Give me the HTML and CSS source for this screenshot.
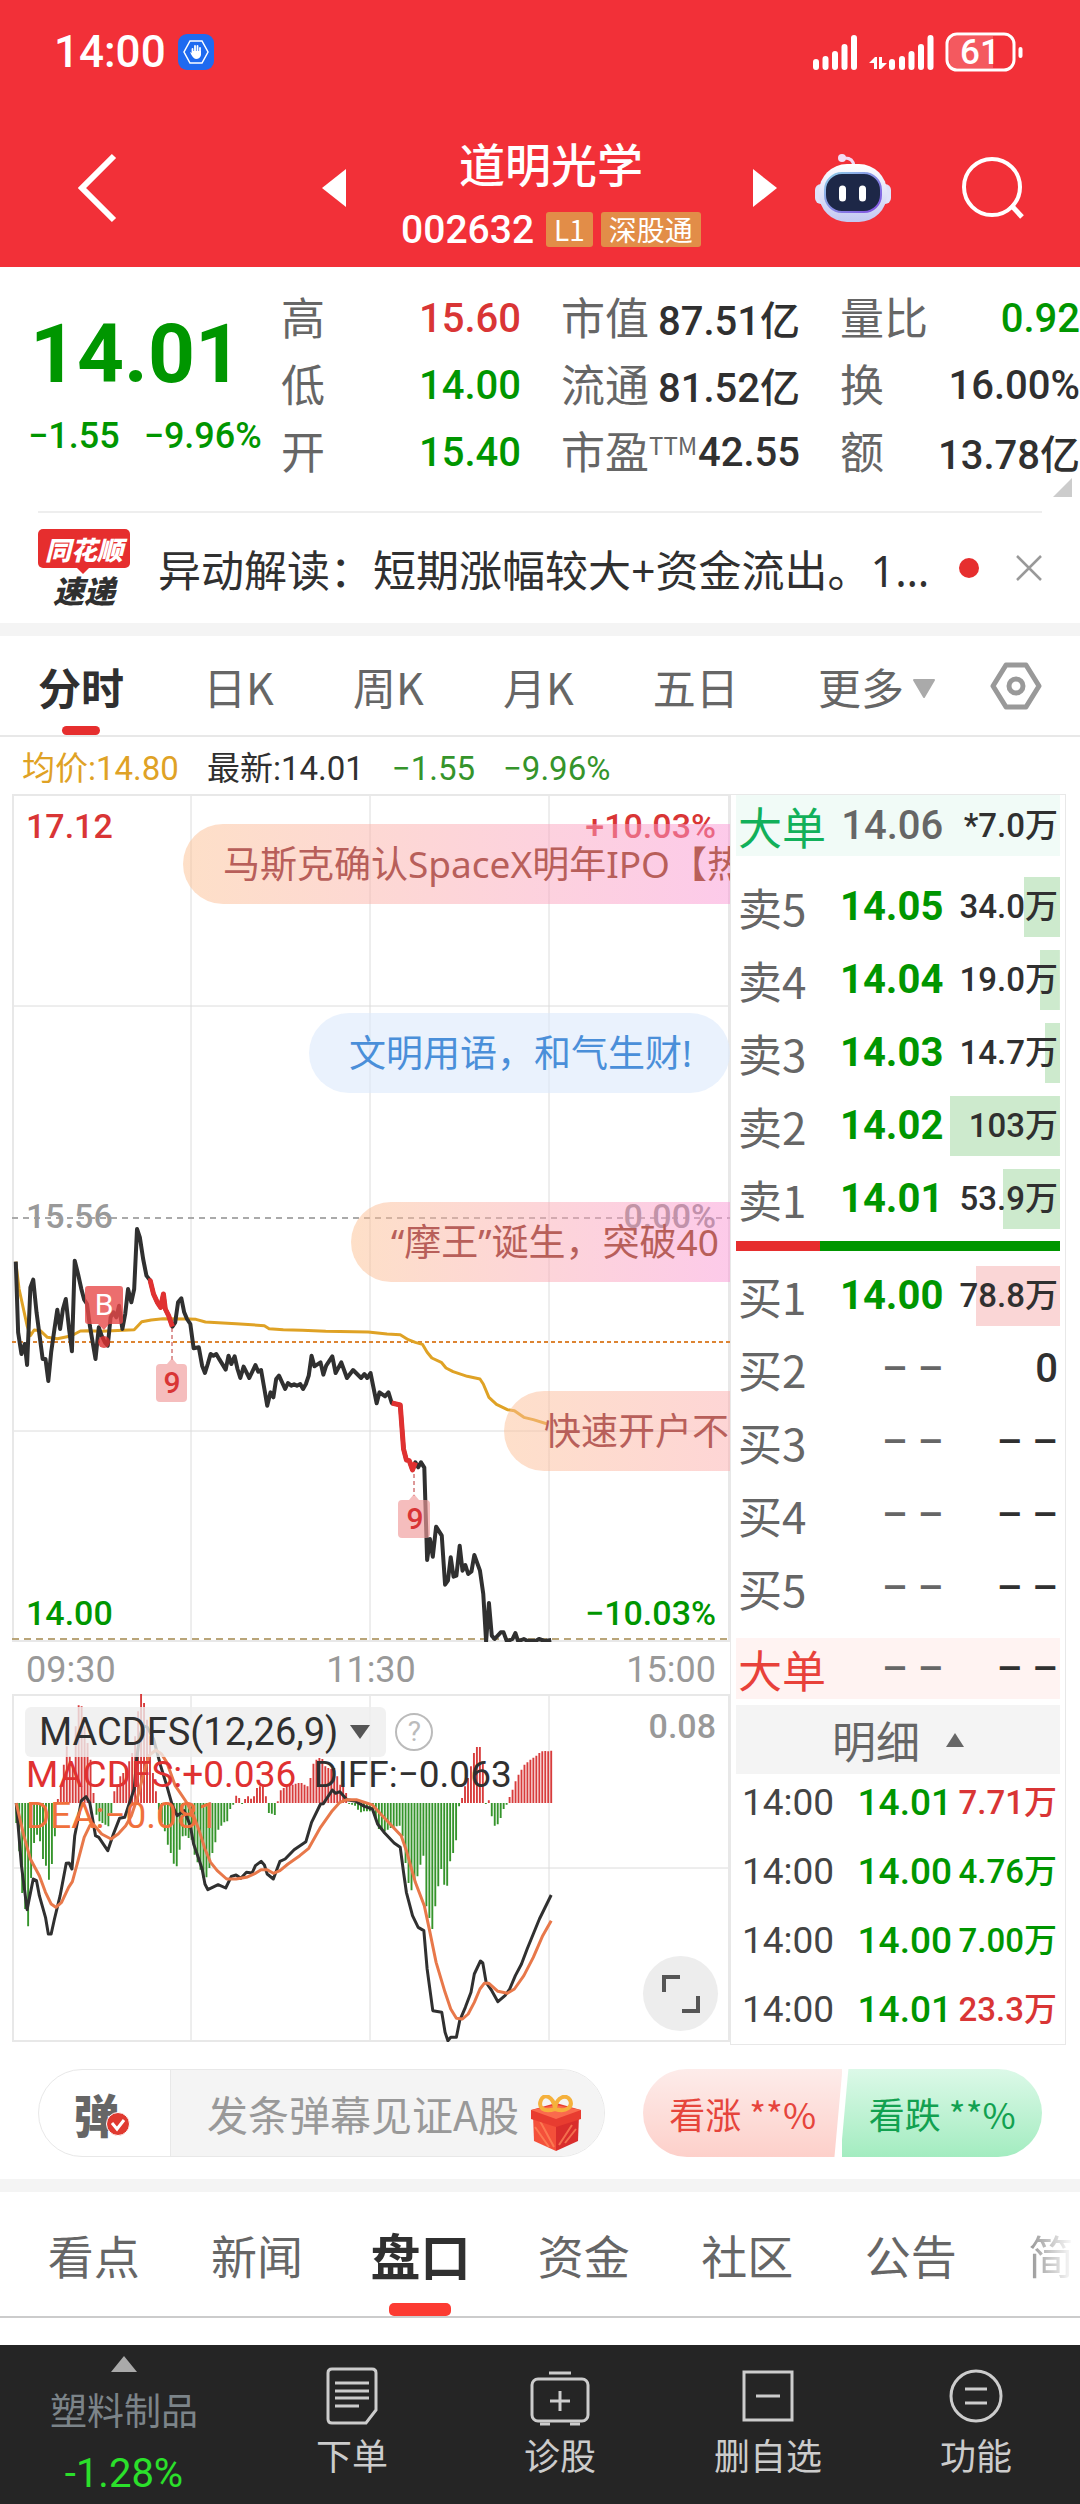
FILE: index.html
```
<!DOCTYPE html>
<html lang="zh-CN">
<head>
    <meta charset="UTF-8">
    <meta name="viewport" content="width=device-width, initial-scale=1.0">
    <title>道明光学 002632</title>
    <link rel="stylesheet" href="styles.css">
</head>
<body>
    <header class="header">
        <div class="status-bar">
            <span class="clock">14:00</span>
            <svg class="app-badge" viewBox="0 0 36 36" aria-hidden="true">
                <rect width="36" height="36" rx="9" fill="#1f6af0"/>
                <path d="M12 7h12l6 11-6 11H12L6 18z" fill="none" stroke="#fff" stroke-width="1.5"/>
                <path d="M14.500 19v-4M17 18v-6M19.500 18v-6M22 19v-5" stroke="#fff" stroke-width="1.8" stroke-linecap="round"/>
                <path d="M12 18l2 1v-2h9v4q-1 4-5 4-3 0-6-7z" fill="#fff"/>
            </svg>
            <svg class="signal" viewBox="0 0 212 40" aria-hidden="true">
                <g stroke="#fff" stroke-width="6" stroke-linecap="round">
                    <path d="M4 30v5M13.500 27v8M23 22v13M32.500 15v20M42 6v29"/>
                    <path d="M80 30v5M90 27v8M99.500 22v13M109 15v20M118.500 6v29"/>
                </g>
                <path d="M57 31l6-6h2v12h-3v-6zM67 25h3v6h5l-6 6h-2z" fill="#fff"/>
                <path d="M138 4h43v32h-43q-2-16 0-32z" fill="#fff" opacity=".2"/>
                <rect x="135" y="2" width="67" height="36" rx="10" fill="none" stroke="#fff" stroke-width="3"/>
                <path d="M208.500 17v7" stroke="#fff" stroke-width="4" stroke-linecap="round"/>
                <text x="168" y="32" class="battery-text">61</text>
            </svg>
        </div>
        <nav class="nav">
            <div class="nav-left">
                <button class="icon-btn" aria-label="返回">
                    <svg width="40" height="70" viewBox="0 0 40 70"><path d="M36 3L4 35l32 32" fill="none" stroke="#fff" stroke-width="6"/></svg>
                </button>
                <button class="icon-btn" aria-label="上一只">
                    <svg width="24" height="38" viewBox="0 0 24 38"><path d="M24 0v38L0 19z" fill="#fff"/></svg>
                </button>
            </div>
            <div class="nav-title">
                <h1>道明光学</h1>
                <div class="code-row">
                    <span class="code num">002632</span>
                    <span class="badge">L1</span>
                    <span class="badge">深股通</span>
                </div>
            </div>
            <div class="nav-right">
                <button class="icon-btn next" aria-label="下一只">
                    <svg width="24" height="38" viewBox="0 0 24 38"><path d="M0 0v38l24-19z" fill="#fff"/></svg>
                </button>
                <button class="icon-btn robot" aria-label="智能助手">
                    <svg width="76" height="70" viewBox="0 0 76 70">
                        <defs>
                            <linearGradient id="shell" x1="0" y1="0" x2="0" y2="1">
                                <stop offset="0" stop-color="#fff"/>
                                <stop offset="1" stop-color="#c3c8f2"/>
                            </linearGradient>
                            <linearGradient id="visor-edge" x1="0" y1="0" x2="1" y2="1">
                                <stop offset="0" stop-color="#8fd0e8"/>
                                <stop offset="1" stop-color="#7f4be0"/>
                            </linearGradient>
                        </defs>
                        <path d="M28 5q10-1 11 8" fill="none" stroke="#f3d8f3" stroke-width="3"/>
                        <circle cx="27" cy="5" r="4" fill="#f3dcf5"/>
                        <rect x="0" y="31" width="14" height="20" rx="6" fill="#dfe2fa"/>
                        <rect x="62" y="31" width="14" height="20" rx="6" fill="#dfe2fa"/>
                        <rect x="4" y="11" width="68" height="58" rx="28" fill="url(#shell)"/>
                        <rect x="10" y="20" width="56" height="39" rx="17" fill="#1d2747" stroke="url(#visor-edge)" stroke-width="2"/>
                        <path d="M27.500 36v9M47.500 36v9" stroke="#fff" stroke-width="7" stroke-linecap="round"/>
                    </svg>
                </button>
                <button class="icon-btn search" aria-label="搜索">
                    <svg width="62" height="62" viewBox="0 0 62 62"><circle cx="30" cy="30" r="28" fill="none" stroke="#fff" stroke-width="4"/><path d="M49 48l11 12" stroke="#fff" stroke-width="5"/></svg>
                </button>
            </div>
        </nav>
    </header>

    <main>
        <!-- Quote summary -->
        <section class="quote num">
            <div class="price-block">
                <div class="price down">14.01</div>
                <div class="change down"><span>−1.55</span><span>−9.96%</span></div>
            </div>
            <dl class="facts">
                <div><dt>高</dt><dd class="up">15.60</dd></div>
                <div><dt>低</dt><dd class="down">14.00</dd></div>
                <div><dt>开</dt><dd class="down">15.40</dd></div>
            </dl>
            <dl class="facts">
                <div><dt>市值</dt><dd>87.51亿</dd></div>
                <div><dt>流通</dt><dd>81.52亿</dd></div>
                <div><dt>市盈<sup>TTM</sup></dt><dd>42.55</dd></div>
            </dl>
            <dl class="facts">
                <div><dt>量比</dt><dd class="down">0.92</dd></div>
                <div><dt>换</dt><dd>16.00%</dd></div>
                <div><dt>额</dt><dd>13.78亿</dd></div>
            </dl>
            <span class="corner"></span>
        </section>

        <!-- News flash -->
        <section class="news">
            <div class="news-logo">
                <span class="logo-top">同花顺</span>
                <span class="logo-bottom">速递</span>
            </div>
            <a href="#" class="news-text">异动解读：短期涨幅较大+资金流出。1…</a>
            <span class="news-dot"></span>
            <button class="icon-btn" aria-label="关闭">
                <svg width="26" height="26" viewBox="0 0 26 26"><path d="M1 1l24 24M25 1L1 25" stroke="#999" stroke-width="2.500"/></svg>
            </button>
        </section>

        <!-- Period tabs -->
        <nav class="period-tabs">
            <button class="active">分时</button>
            <button>日K</button>
            <button>周K</button>
            <button>月K</button>
            <button>五日</button>
            <div class="period-extra">
                <button class="more">更多<svg width="24" height="20" viewBox="0 0 24 20"><path d="M2 1h20L12 18z" fill="#aaa" stroke="#aaa" stroke-linejoin="round" stroke-width="2"/></svg></button>
                <button class="settings" aria-label="图表设置">
                    <svg width="52" height="50" viewBox="0 0 52 50" fill="none" stroke="#999" stroke-width="5">
                        <path d="M16 4h20l13 21-13 21H16L3 25z" stroke-linejoin="round"/>
                        <circle cx="26" cy="25" r="7"/>
                    </svg>
                </button>
            </div>
        </nav>

        <div class="legend num">
            <span class="avg">均价:14.80</span>
            <span>最新:14.01</span>
            <span class="down-soft">−1.55</span>
            <span class="down-soft">−9.96%</span>
        </div>

        <div class="board">
            <div class="charts">
                <div class="price-chart">
                    <svg viewBox="0 0 718 848" class="chart num" role="img" aria-label="分时走势">
                        <g class="grid">
                            <path d="M179 0v848M358 0v848M537 0v848M0 212h718M0 637h718"/>
                            <rect x="1" y="1" width="716" height="846"/>
                        </g>
                        <path d="M0 424h718" stroke="#aaa" stroke-width="2" stroke-dasharray="6 5"/>
                        <path d="M0 548h718" stroke="#dd8432" stroke-width="2" stroke-dasharray="4 3"/>
                        <path d="M0 845h718" stroke="#b9a579" stroke-width="2" stroke-dasharray="7 5"/>
                        <svg width="718" height="848" viewBox="25 -1155 1522 2544" preserveAspectRatio="none" class="series">
                            <polyline class="line-avg" points="33,248 40,330 57,440 64,470 72,453 85,455 100,475 121,479 152,470 158,465 170,456 184,455 215,457 284,452 300,428 320,423 345,419 400,420 415,421 435,429 500,434 560,440 570,449 600,452 640,454 690,457 780,459 820,465 848,467 865,482 880,490 895,496 905,520 915,537 935,550 945,567 960,578 990,592 1017,600 1024,615 1036,655 1052,676 1075,692 1090,695 1110,715 1130,722 1160,735"/>
                            <polyline class="line-price" points="33,248 38,460 45,525 52,495 57,558 64,325 70,302 77,400 90,540 96,540 102,606 108,520 115,450 121,392 127,450 133,390 139,360 146,450 152,517 158,245 165,285 172,330 178,362 184,375 190,440 202,540 209,445 215,470 222,490 228,500 234,415 240,400 246,415 252,380 259,450 265,405 271,330 278,370 284,330 290,150 296,175 303,240 310,290 318,305 325,345 333,370 340,385 346,345 350,390 357,410 365,443 371,430 377,370 384,358 390,400 396,420 403,435 410,508 421,505 428,560 434,582 440,555 446,525 452,530 458,525 465,542 478,572 484,530 490,555 497,532 503,570 509,597 516,563 528,597 541,558 547,578 553,573 560,630 566,680 573,640 579,655 585,600 591,590 604,630 610,612 617,620 623,616 629,620 636,615 642,630 648,615 654,590 660,530 666,562 679,550 685,587 691,560 704,532 711,582 723,550 735,597 748,573 765,597 772,585 778,597 785,582 798,673 804,640 816,652 823,640 830,672 848,678 855,810 861,843 867,845 874,873 880,850 886,865 892,850 899,866 905,1143 911,1080 917,1133 924,1043 936,1070 943,1217 949,1205 955,1135 961,1193 967,1190 974,1100 980,1175 986,1158 992,1185 999,1177 1005,1128 1017,1175 1024,1245 1030,1388 1036,1272 1042,1370 1048,1380 1061,1360 1067,1360 1074,1387 1086,1380 1092,1362 1098,1387 1110,1380 1117,1385 1136,1385 1142,1380 1154,1386 1168,1383"/>
                            <polyline class="line-hot" points="314,306 318,305 325,345 333,370 340,385 346,345 350,390 357,410 365,443"/>
                            <polyline class="line-hot" points="830,672 848,678 855,810 861,843 867,845 874,873 880,850"/>
                        </svg>
                        <!-- Buy and nine-turn markers -->
                        <g opacity=".8">
                            <path d="M76 492h32q3 0 3 3v32q0 3-3 3H97l-5 6-6-6H76q-3 0-3-3v-32q0-3 3-3z" fill="#e84a4a"/>
                            <circle cx="92" cy="548" r="6" fill="#e03131"/>
                        </g>
                        <text x="92" y="521" class="mark-b">B</text>
                        <path d="M160 534v32M402 680v22" stroke="#b33" stroke-width="1" stroke-dasharray="4 3"/>
                        <g fill="#ef9a9a" opacity=".65">
                            <path d="M148 570h7l5-6 5 6h6q4 0 4 4v30q0 4-4 4h-23q-4 0-4-4v-30q0-4 4-4z"/>
                            <path d="M390 706h7l5-6 5 6h7q4 0 4 4v30q0 4-4 4h-24q-4 0-4-4v-30q0-4 4-4z"/>
                        </g>
                        <text x="160" y="599" class="mark-9">9</text>
                        <text x="403" y="735" class="mark-9">9</text>
                        <text x="14" y="44" fill="#d93535">17.12</text>
                        <text x="704" y="44" fill="#d93535" text-anchor="end">+10.03%</text>
                        <text x="14" y="434" fill="#999">15.56</text>
                        <text x="704" y="434" fill="#888" text-anchor="end">0.00%</text>
                        <text x="14" y="831" fill="#009600">14.00</text>
                        <text x="704" y="831" fill="#009600" text-anchor="end">−10.03%</text>
                    </svg>
                    <!-- Bullet comments floating over the chart -->
                    <span class="bullet bullet-1">马斯克确认SpaceX明年IPO【热</span>
                    <span class="bullet bullet-2">文明用语，和气生财!</span>
                    <span class="bullet bullet-3">“摩王”诞生，突破40</span>
                    <span class="bullet bullet-4">快速开户不</span>
                </div>
                <div class="time-axis num"><span>09:30</span><span>11:30</span><span>15:00</span></div>
                <div class="macd">
                    <svg viewBox="0 0 718 348" class="chart num" role="img" aria-label="MACDFS">
                        <g class="grid">
                            <path d="M179 0v348M358 0v348M537 0v348M0 174h718"/>
                            <rect x="1" y="1" width="716" height="346"/>
                        </g>
                        <svg width="718" height="348" viewBox="25 45 1522 1044" preserveAspectRatio="none" class="series">
                            <path id="bars-up" class="bars-up"/>
                            <path id="bars-down" class="bars-down"/>
                            <polyline class="line-diff" points="34,372 45,560 57,692 70,600 77,605 83,650 96,715 102,765 108,765 115,720 127,650 140,553 146,552 152,570 158,470 165,420 172,365 182,353 190,372 202,470 209,475 228,515 240,465 253,418 264,415 272,380 284,330 290,230 296,170 303,140 312,145 325,180 340,260 353,320 365,380 375,410 390,395 403,440 410,495 421,540 428,570 434,615 440,632 450,625 462,617 478,627 490,592 500,588 510,598 522,580 534,582 541,560 553,547 560,558 566,585 579,600 593,547 604,540 623,512 648,488 660,430 679,375 685,374 704,333 711,343 720,338 735,362 754,367 772,382 789,390 800,435 815,462 835,492 848,505 855,580 861,640 874,710 886,745 898,755 905,870 917,995 936,1000 943,1060 949,1085 955,1075 967,1075 974,1025 986,985 998,940 1005,885 1018,846 1023,852 1030,910 1042,935 1055,968 1070,950 1080,930 1092,890 1105,855 1117,810 1130,765 1143,720 1168,648"/>
                            <polyline class="line-dea" points="34,372 50,470 64,540 83,590 96,640 108,675 118,685 130,670 145,625 153,608 165,545 178,475 190,440 197,435 215,465 235,480 250,465 266,440 278,410 290,360 303,290 315,230 330,213 342,225 353,250 371,320 396,372 410,410 423,460 434,510 446,550 460,575 480,600 500,600 522,595 541,583 553,572 566,572 579,583 593,575 610,555 635,530 654,508 679,445 704,395 720,370 735,362 755,362 789,378 810,410 830,440 850,470 861,515 880,610 899,680 911,760 924,850 943,940 955,990 967,1018 980,1020 992,1005 1005,970 1017,930 1026,913 1036,913 1055,937 1075,943 1090,930 1110,890 1130,835 1150,770 1168,725"/>
                        </svg>
                        <text x="704" y="44" fill="#999" text-anchor="end">0.08</text>
                    </svg>
                    <div class="macd-head">
                        <button class="indicator">MACDFS(12,26,9)<svg width="20" height="14" viewBox="0 0 20 14"><path d="M0 0h20L10 14z" fill="#555"/></svg></button>
                        <button class="help" aria-label="指标说明">?</button>
                    </div>
                    <p class="macd-values"><span class="red">MACDFS:+0.036</span> <span>DIFF:−0.063</span><br><span class="orange">DEA:−0.081</span></p>
                    <button class="expand" aria-label="横屏">
                        <svg width="40" height="40" viewBox="0 0 40 40"><path d="M3 18V3h16M37 22v15H21" fill="none" stroke="#555" stroke-width="4"/></svg>
                    </button>
                </div>
            </div>

            <!-- Order book -->
            <aside class="book num">
                <table class="orders">
                    <colgroup><col class="c-side"><col class="c-price"><col class="c-qty"></colgroup>
                    <tbody class="big big-sell">
                        <tr><th scope="row">大单</th><td>14.06</td><td>*7.0万</td></tr>
                    </tbody>
                    <tbody class="sell">
                        <tr><th scope="row">卖5</th><td>14.05</td><td style="--bar: 31%">34.0万</td></tr>
                        <tr><th scope="row">卖4</th><td>14.04</td><td style="--bar: 17%">19.0万</td></tr>
                        <tr><th scope="row">卖3</th><td>14.03</td><td style="--bar: 13%">14.7万</td></tr>
                        <tr><th scope="row">卖2</th><td>14.02</td><td style="--bar: 94%">103万</td></tr>
                        <tr><th scope="row">卖1</th><td>14.01</td><td style="--bar: 49%">53.9万</td></tr>
                    </tbody>
                </table>
                <div class="ratio"><span style="width: 26%"></span></div>
                <table class="orders">
                    <colgroup><col class="c-side"><col class="c-price"><col class="c-qty"></colgroup>
                    <tbody class="buy">
                        <tr><th scope="row">买1</th><td>14.00</td><td style="--bar: 72%">78.8万</td></tr>
                        <tr><th scope="row">买2</th><td class="none">– –</td><td class="whole">0</td></tr>
                        <tr><th scope="row">买3</th><td class="none">– –</td><td class="whole">– –</td></tr>
                        <tr><th scope="row">买4</th><td class="none">– –</td><td class="whole">– –</td></tr>
                        <tr><th scope="row">买5</th><td class="none">– –</td><td class="whole">– –</td></tr>
                    </tbody>
                    <tbody class="big big-buy">
                        <tr><th scope="row">大单</th><td class="none">– –</td><td class="whole">– –</td></tr>
                    </tbody>
                </table>
                <button class="detail-toggle">明细<svg width="18" height="14" viewBox="0 0 18 14"><path d="M9 0l9 14H0z" fill="#666"/></svg></button>
                <table class="trades">
                    <tr><td>14:00</td><td>14.01</td><td class="up">7.71万</td></tr>
                    <tr><td>14:00</td><td>14.00</td><td class="down">4.76万</td></tr>
                    <tr><td>14:00</td><td>14.00</td><td class="down">7.00万</td></tr>
                    <tr><td>14:00</td><td>14.01</td><td class="up">23.3万</td></tr>
                </table>
            </aside>
        </div>

        <section class="interact">
            <div class="comment-box">
                <button class="bullet-switch" aria-label="弹幕开关">弹<svg width="24" height="24" viewBox="0 0 24 24"><circle cx="12" cy="12" r="11.500" fill="#e03a30" stroke="#fff"/><path d="M6 11l5 6 7-9" fill="none" stroke="#fff" stroke-width="3"/></svg></button>
                <input type="text" placeholder="发条弹幕见证A股" aria-label="发条弹幕">
                <svg class="gift" viewBox="0 0 52 56" aria-hidden="true">
                    <path d="M3 20l23 8v28L4 46z" fill="#f4503a"/>
                    <path d="M49 20l-23 8v28l22-10z" fill="#d92d2c"/>
                    <path d="M10 26l14 26M5 32l14 20M42 30L29 50M46 34L35 48" stroke="#ff8a5c" stroke-width="2" opacity=".7"/>
                    <path d="M1 15l25-7 25 7v9l-25 8-25-8z" fill="#e83c30"/>
                    <path d="M1 15l25-5 25 5-25 9z" fill="#fa6a4d"/>
                    <path d="M25 14C13 18 8 12 11 5s12-4 14 8c2-12 12-14 15-8s-3 13-15 9z" fill="none" stroke="#f5b13c" stroke-width="4"/>
                </svg>
            </div>
            <div class="vote">
                <button class="vote-up">看涨 **%</button>
                <button class="vote-down">看跌 **%</button>
            </div>
        </section>

        <nav class="info-tabs">
            <button>看点</button>
            <button>新闻</button>
            <button class="active">盘口</button>
            <button>资金</button>
            <button>社区</button>
            <button>公告</button>
            <button class="faded">简况</button>
        </nav>
    </main>

    <footer class="toolbar">
        <a href="#" class="sector">
            <svg width="26" height="16" viewBox="0 0 26 16"><path d="M13 0l13 16H0z" fill="#aaa"/></svg>
            <span>塑料制品</span>
            <strong>-1.28%</strong>
        </a>
        <a href="#" class="tool">
            <svg width="60" height="60" viewBox="0 0 60 60"><path d="M10 3h40q4 0 4 4v37L44 57H10q-4 0-4-4V7q0-4 4-4z"/><path d="M13 17h34M13 25h34M13 32h34M13 40h24"/></svg>
            <span>下单</span>
        </a>
        <a href="#" class="tool">
            <svg width="60" height="60" viewBox="0 0 60 60"><rect x="2" y="13" width="56" height="42" rx="6"/><path d="M19 7h22M30 25v20M20 35h20M10 58h10M40 58h10"/></svg>
            <span>诊股</span>
        </a>
        <a href="#" class="tool">
            <svg width="60" height="60" viewBox="0 0 60 60"><rect x="6" y="6" width="48" height="48"/><path d="M18 30h24"/></svg>
            <span>删自选</span>
        </a>
        <a href="#" class="tool">
            <svg width="60" height="60" viewBox="0 0 60 60"><circle cx="30" cy="30" r="25"/><path d="M19 23h22M19 37h22"/></svg>
            <span>功能</span>
        </a>
    </footer>
    <script src="chart.js"></script>
</body>
</html>
```
FILE: styles.css
```
* {
    box-sizing: border-box;
}
body {
    margin: 0;
    font-family: 'Noto Sans CJK SC', sans-serif;
    color: #303030;
    background: #fff;
    font-size: 44px;
}
.num {
    font-family: Roboto, 'Noto Sans CJK SC', sans-serif;
}
button {
    border: none;
    background: none;
    padding: 0;
    margin: 0;
    font: inherit;
    color: inherit;
    cursor: pointer;
}
a {
    color: inherit;
    text-decoration: none;
}
h1, dl, dd, p {
    margin: 0;
}
.up {
    color: #d93535;
}
.down {
    color: #009600;
}
.down-soft {
    color: #35942b;
}
.icon-btn {
    display: flex;
}

/* Header */
.header {
    background: #f23038;
    color: #fff;
}
.status-bar {
    display: flex;
    align-items: center;
    height: 104px;
    padding: 0 56px 0 54px;
}
.clock {
    font: 500 44px/50px Roboto, sans-serif;
}
.app-badge {
    width: 36px;
    margin-left: 12px;
}
.signal {
    width: 212px;
    margin-left: auto;
}
.battery-text {
    font: 500 35px Roboto, sans-serif;
    fill: #fff;
    text-anchor: middle;
}
.nav {
    display: grid;
    grid-template-columns: 1fr auto 1fr;
    align-items: center;
    height: 163px;
    padding: 5px 56px 0 78px;
}
.nav-left {
    display: flex;
    align-items: center;
    justify-content: space-between;
    padding-right: 55px;
}
.nav-right {
    display: flex;
    align-items: center;
    padding-left: 52px;
}
.nav-right .next {
    margin-right: auto;
}
.nav-right .robot {
    margin-right: 71px;
}
.nav-title {
    padding-top: 16px;
    text-align: center;
}
.nav-title h1 {
    margin-bottom: 5px;
    font-size: 46px;
    font-weight: 500;
    line-height: 62px;
}
.code-row {
    display: flex;
    align-items: center;
    gap: 8px;
    line-height: 64px;
}
.code {
    font-size: 39px;
    font-weight: 500;
    margin-right: 4px;
}
.badge {
    padding: 0 8px;
    border-radius: 3px;
    background: #e28d48;
    font-size: 28px;
    line-height: 35px;
}

/* Quote */
.quote {
    position: relative;
    display: grid;
    grid-template-columns: minmax(0, 213fr) minmax(0, 240fr) minmax(0, 239fr) minmax(0, 240fr);
    gap: 40px;
    padding: 16px 0 27px 28px;
}
.price-block {
    white-space: nowrap;
}
.price {
    font-size: 82px;
    font-weight: bold;
    line-height: 110px;
    padding: 16px 0 0 2px;
}
.change {
    display: flex;
    gap: 24px;
    font-size: 36px;
    font-weight: 500;
    line-height: 54px;
}
.facts div {
    display: flex;
    justify-content: space-between;
    align-items: center;
    height: 67px;
    white-space: nowrap;
}
.facts dt {
    font-family: 'Noto Sans CJK SC', sans-serif;
    color: #666;
    line-height: 67px;
}
.facts dd {
    font-size: 40px;
    font-weight: 500;
    padding-top: 3px;
}
.facts sup {
    font-size: 24px;
    line-height: 24px;
    vertical-align: 14px;
}
.corner {
    position: absolute;
    right: 8px;
    bottom: 14px;
    border-left: 19px solid transparent;
    border-bottom: 19px solid #ccc;
}

/* News */
.news {
    display: flex;
    align-items: center;
    height: 112px;
    margin: 0 38px;
    border-top: 2px solid #eee;
}
.news-logo {
    flex: none;
    width: 92px;
    margin-right: 28px;
    text-align: center;
    font-style: italic;
    font-weight: 900;
}
.logo-top {
    position: relative;
    display: block;
    background: #e62e2e;
    color: #fff;
    border-radius: 5px;
    font-size: 26px;
    line-height: 39px;
}
.logo-top::after {
    content: '';
    position: absolute;
    left: 38px;
    top: 38px;
    border: 7px solid transparent;
    border-top-color: #e62e2e;
}
.logo-bottom {
    display: block;
    padding-top: 4px;
    font-size: 31px;
    line-height: 36px;
}
.news-text {
    flex: 1;
    font-family: 'Noto Sans', 'Noto Sans CJK SC', sans-serif;
    font-size: 43px;
    white-space: nowrap;
}
.news-dot {
    width: 20px;
    height: 20px;
    margin-right: 37px;
    border-radius: 50%;
    background: #e62e2e;
}

/* Period tabs */
.period-tabs {
    display: flex;
    justify-content: space-between;
    align-items: center;
    height: 114px;
    padding: 0 38px;
    border-top: 13px solid #f4f4f4;
    border-bottom: 2px solid #e8e8e8;
    font-size: 43px;
    color: #666;
}
.period-tabs button {
    position: relative;
    line-height: 98px;
    white-space: nowrap;
}
.period-tabs .active {
    color: #303030;
    font-weight: bold;
}
.period-tabs .active::after,
.info-tabs .active::after {
    content: '';
    position: absolute;
    left: 50%;
    bottom: 0;
    width: 38px;
    height: 9px;
    margin-left: -19px;
    border-radius: 5px;
    background: #e62e2e;
}
.period-extra {
    display: flex;
    align-items: center;
    gap: 54px;
}
.more svg {
    margin-left: 8px;
    vertical-align: 6px;
}
.settings {
    display: flex;
}
.legend {
    display: flex;
    gap: 28px;
    padding: 6px 22px 0;
    font-size: 33px;
    line-height: 51px;
}
.avg {
    color: #dfa225;
}

/* Charts */
.board {
    display: grid;
    grid-template-columns: 718fr 336fr;
    padding: 0 14px 0 12px;
}
.chart {
    display: block;
    width: 100%;
    font-size: 34px;
    font-weight: 500;
}
.price-chart,
.macd {
    position: relative;
    overflow: hidden;
}
.grid {
    fill: none;
    stroke: #dcdcdc;
    stroke-width: 1;
}
.grid rect {
    stroke: #e8e8e8;
    stroke-width: 2;
}
.series {
    fill: none;
    stroke-linejoin: round;
}
.series polyline {
    vector-effect: non-scaling-stroke;
}
.line-avg {
    stroke: #dfa225;
    stroke-width: 3;
}
.line-price {
    stroke: #303030;
    stroke-width: 4;
}
.line-hot {
    stroke: #e03131;
    stroke-width: 5;
}
.line-diff {
    stroke: #303030;
    stroke-width: 3;
}
.line-dea {
    stroke: #e8784a;
    stroke-width: 3;
}
.bars-up {
    stroke: #d83c3c;
    stroke-width: 4;
}
.bars-down {
    stroke: #35942b;
    stroke-width: 4;
}
.mark-b {
    font: 30px Roboto, sans-serif;
    fill: #fff;
    text-anchor: middle;
}
.mark-9 {
    font-size: 30px;
    fill: #d93535;
    text-anchor: middle;
}
.bullet {
    position: absolute;
    right: 0;
    height: 80px;
    padding-left: 40px;
    border-radius: 40px 0 0 40px;
    background: linear-gradient(90deg, rgba(252, 192, 145, .5), rgba(250, 150, 212, .5));
    color: #b85f5a;
    font-family: 'Noto Sans', 'Noto Sans CJK SC', sans-serif;
    font-size: 37px;
    line-height: 80px;
    white-space: nowrap;
    overflow: hidden;
}
.bullet-1 {
    left: 171px;
    top: 30px;
}
.bullet-2 {
    left: 297px;
    top: 219px;
    border-radius: 40px;
    background: rgba(220, 233, 252, .6);
    color: #4a8fd9;
}
.bullet-3 {
    left: 339px;
    top: 408px;
}
.bullet-4 {
    left: 492px;
    top: 597px;
    background: linear-gradient(90deg, rgba(252, 192, 150, .5), rgba(252, 172, 172, .5));
}
.time-axis {
    display: flex;
    justify-content: space-between;
    padding: 4px 14px 0;
    color: #999;
    font-size: 36px;
    line-height: 48px;
}
.macd-head {
    position: absolute;
    left: 13px;
    top: 13px;
    display: flex;
    align-items: center;
    gap: 9px;
}
.indicator {
    display: flex;
    align-items: center;
    gap: 12px;
    padding: 0 16px 0 14px;
    border-radius: 6px;
    background: rgba(238, 238, 238, .8);
    font: 38px/50px Roboto, sans-serif;
}
.help {
    width: 38px;
    height: 38px;
    border: 2px solid #bbb;
    border-radius: 50%;
    color: #bbb;
    font: 28px/32px Roboto, sans-serif;
}
.macd-values {
    position: absolute;
    left: 14px;
    top: 60px;
    font: 37px/41px Roboto, sans-serif;
}
.red {
    color: #e03131;
    margin-right: 8px;
}
.orange {
    color: #f0703c;
}
.expand {
    position: absolute;
    right: 12px;
    bottom: 11px;
    display: flex;
    align-items: center;
    justify-content: center;
    width: 75px;
    height: 75px;
    border-radius: 50%;
    background: #ededed;
}

/* Order book */
.book {
    border: 1px solid #e8e8e8;
    padding: 0 5px;
}
.orders,
.trades {
    width: 100%;
    table-layout: fixed;
    border-collapse: collapse;
    white-space: nowrap;
    font-size: 40px;
}
.c-side {
    width: 28%;
}
.c-price {
    width: 36%;
}
.c-qty {
    width: 36%;
}
.orders th,
.orders td,
.trades td {
    height: 73px;
    padding: 0;
    line-height: 60px;
    text-align: right;
}
.orders th {
    padding-left: 2px;
    text-align: left;
    color: #666;
    font: 44px/60px 'Noto Sans CJK SC', sans-serif;
}
.orders td:nth-child(2) {
    color: #009600;
    font-weight: bold;
}
.orders td:nth-child(3) {
    padding-right: 2px;
    font-size: 33px;
    font-weight: 500;
    background: linear-gradient(#cdeacd, #cdeacd) right center / var(--bar, 0) 60px no-repeat;
}
.orders .buy td:nth-child(3) {
    background-image: linear-gradient(#fad6d6, #fad6d6);
}
.orders .whole:nth-child(3) {
    font-size: 40px;
}
.orders .none:nth-child(2),
.orders .big-sell td:nth-child(2) {
    color: #666;
    font-weight: 500;
}
.orders .big th,
.orders .big td {
    height: 61px;
}
.orders .big-sell tr {
    background: #f1fbf7;
}
.orders .big-buy tr {
    background: #fff3f2;
}
.orders .big-sell th {
    color: #12b05a;
}
.orders .big-buy th {
    color: #e8413a;
}
.big-sell::after,
.big-buy::before {
    content: '';
    display: block;
    height: 14px;
}
.ratio {
    height: 10px;
    margin: 6px 0 8px;
    background: #009600;
}
.ratio span {
    display: block;
    height: 10px;
    background: #e62e2e;
}
.detail-toggle {
    display: flex;
    align-items: center;
    justify-content: center;
    gap: 26px;
    width: 100%;
    height: 69px;
    margin-top: 6px;
    background: #f4f4f4;
    color: #666;
    font: 44px 'Noto Sans CJK SC', sans-serif;
}
.trades {
    margin-top: -6px;
    font-size: 37px;
    font-weight: 500;
}
.trades td {
    height: 69px;
    color: #009600;
}
.trades td:first-child {
    padding-left: 6px;
    text-align: left;
    font-weight: normal;
    color: #444;
}
.trades td:last-child {
    padding-right: 3px;
    font-size: 33px;
}
.trades .up {
    color: #d93535;
}

/* Comment and vote */
.interact {
    display: flex;
    justify-content: space-between;
    gap: 38px;
    padding: 24px 38px 22px;
}
.comment-box {
    position: relative;
    flex: 566;
    display: flex;
    height: 88px;
    border: 1px solid #e8e8e8;
    border-radius: 44px;
    overflow: hidden;
}
.bullet-switch {
    flex: none;
    position: relative;
    width: 131px;
    padding-right: 16px;
    font-size: 46px;
    font-weight: 900;
    line-height: 80px;
    color: #666;
}
.bullet-switch svg {
    position: absolute;
    left: 67px;
    bottom: 20px;
}
.comment-box input {
    flex: 1;
    min-width: 0;
    border: none;
    border-left: 1px solid #e8e8e8;
    padding: 0 0 0 36px;
    background: #f4f4f4;
    font: 41px 'Noto Sans CJK SC', sans-serif;
}
.comment-box input::placeholder {
    color: #999;
}
.gift {
    position: absolute;
    right: 22px;
    top: 25px;
    width: 52px;
}
.vote {
    flex: 400;
    display: flex;
    border-radius: 44px;
    overflow: hidden;
    font-size: 36px;
    white-space: nowrap;
}
.vote button {
    flex: 1;
}
.vote-up {
    background: linear-gradient(#fdecea, #fdd0ca);
    color: #e6453c;
    clip-path: polygon(0 0, 100% 0, 96% 100%, 0 100%);
}
.vote-down {
    background: linear-gradient(#dcf9e8, #a3ecc0);
    color: #12a150;
    clip-path: polygon(3% 0, 100% 0, 100% 100%, -1% 100%);
}

/* Info tabs */
.info-tabs {
    display: flex;
    height: 139px;
    padding-left: 12px;
    border-top: 13px solid #f4f4f4;
    border-bottom: 2px solid #ccc;
    font-size: 46px;
    color: #666;
    overflow: hidden;
}
.info-tabs button {
    position: relative;
    flex: 0 0 15.3%;
    line-height: 120px;
}
.info-tabs .active {
    font-size: 50px;
    font-weight: bold;
    color: #303030;
}
.info-tabs .active::after {
    width: 62px;
    height: 13px;
    margin-left: -31px;
    background: #fc3b32;
}
.info-tabs .faded {
    -webkit-mask-image: linear-gradient(90deg, #000 10%, transparent 50%);
    mask-image: linear-gradient(90deg, #000 10%, transparent 50%);
}

/* Bottom toolbar */
.toolbar {
    display: grid;
    grid-template-columns: 248fr 208fr 208fr 208fr 208fr;
    margin-top: 27px;
    height: 159px;
    background: #252525;
    color: #ccc;
    font-size: 36px;
    text-align: center;
}
.toolbar a {
    display: flex;
    flex-direction: column;
    align-items: center;
}
.tool {
    padding-top: 21px;
    line-height: 56px;
}
.tool svg {
    fill: none;
    stroke: #ccc;
    stroke-width: 3;
}
.sector {
    padding-top: 11px;
    color: #7c8489;
    font-size: 37px;
    line-height: 74px;
}
.sector strong {
    color: #2be02b;
    font: 40px/56px Roboto, sans-serif;
}
```
FILE: chart.js
```
// One value per minute, above or below the zero line.
const bars = [
    -60, -145, -270, -318, -370, -225, -120, -95, -115, -168, -188, -230, -183, -100, 12, 50, 115, 170, 140, 110,
    230, 293, 290, 230, 180, 130, 30, -35, -55, -60, -65, -70, -30, 35, 55, 80, 90, 110, 125, 150,
    200, 275, 330, 300, 250, 200, 90, 35, -20, -60, -85, -125, -150, -182, -190, -140, -100, -98, -105, -110,
    -155, -178, -200, -225, -223, -195, -150, -118, -80, -68, -58, -55, -18, -5, 22, 15, -3, 12, 20, 13,
    20, 45, 50, 52, 20, -30, -32, -36, 5, 38, 45, 50, 52, 55, 58, 60, 60, 55, 50, 75,
    118, 130, 135, 132, 110, 105, 102, 105, 80, 55, 60, 30, -3, -5, -8, -20, -28, -25, -25, -25,
    -28, -50, -78, -80, -85, -80, -75, -72, -70, -68, -100, -180, -240, -262, -230, -220, -185, -158, -310, -345,
    -378, -310, -250, -198, -245, -248, -175, -150, -112, -10, 15, 50, 75, 110, 150, 168, 168, 120, -3, 8,
    -40, -68, -64, -45, -18, -5, 18, 40, 65, 85, 100, 115, 122, 130, 136, 142, 150, 155, 156, 155, 157
];
const zero = 372;
const step = 6.3;

function barPath(keep) {
    return bars.map((v, i) => keep(v) ? `M${(34 + i * step).toFixed(1)} ${zero}V${zero - v}` : '').join('');
}

document.getElementById('bars-up').setAttribute('d', barPath(v => v > 0));
document.getElementById('bars-down').setAttribute('d', barPath(v => v < 0));
```
